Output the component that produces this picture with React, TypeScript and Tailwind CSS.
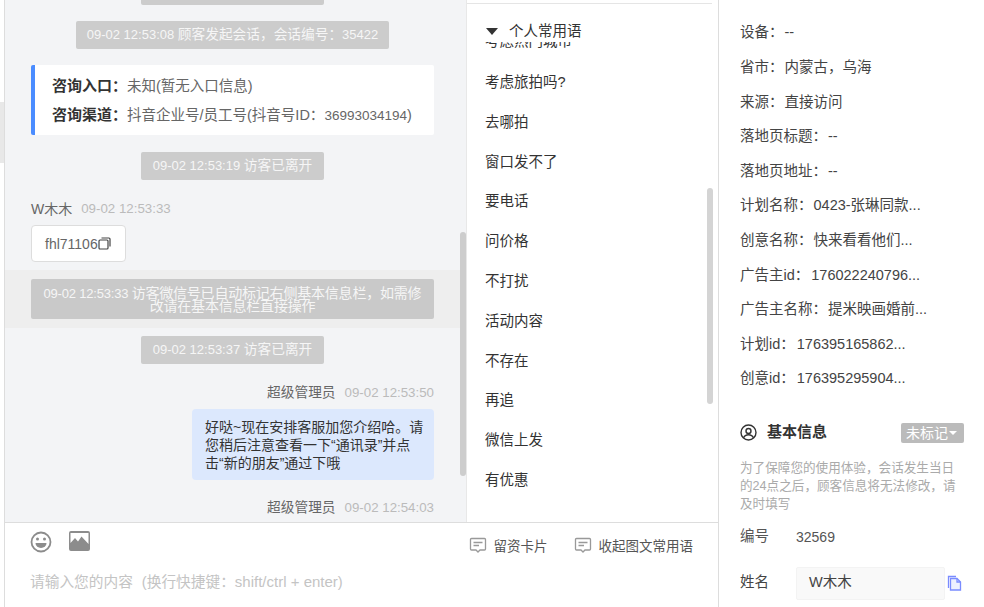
const font = "font-['Liberation_Sans','Noto_Sans_CJK_SC',sans-serif]"

function Lat({ children }: { children: React.ReactNode }) {
    return <span className="text-[13px]">{children}</span>
}

function SysPill({ time, text, num, className = "" }: { time?: string; text?: string; num?: string; className?: string }) {
    return (
        <div className={`self-center h-7 flex items-center justify-center bg-[#cccccc] text-[#f6f6f6] text-[13.700px] rounded-[2px] whitespace-nowrap ${className}`}>
            <span>
                {time && <Lat>{time} </Lat>}
                {text}
                {num && <Lat>{num}</Lat>}
            </span>
        </div>
    )
}

function ChatIcon() {
    return (
        <svg width="18" height="17" viewBox="0 0 18 17" fill="none" stroke="#999999" strokeWidth="1.3">
            <path d="M2.5 1.5h13a1 1 0 0 1 1 1v9.500a1 1 0 0 1-1 1h-4.500l-2 2-2-2h-4.500a1 1 0 0 1-1-1v-9.500a1 1 0 0 1 1-1z" />
            <path d="M4.500 5.500h9M4.500 8.500h5.500" />
        </svg>
    )
}

const phrases = ["考虑旅拍吗?", "去哪拍", "窗口发不了", "要电话", "问价格", "不打扰", "活动内容", "不存在", "再追", "微信上发", "有优惠"]

const infoRows = [
    ["设备：", "--"],
    ["省市：", "内蒙古，乌海"],
    ["来源：", "直接访问"],
    ["落地页标题：", "--"],
    ["落地页地址：", "--"],
    ["计划名称：", "0423-张琳同款..."],
    ["创意名称：", "快来看看他们..."],
    ["广告主id：", "176022240796..."],
    ["广告主名称：", "提米映画婚前..."],
    ["计划id：", "176395165862..."],
    ["创意id：", "176395295904..."],
]

export default function App() {
    return (
        <div className={`${font} w-[984px] h-[607px] flex overflow-hidden bg-white text-[#333333]`}>
            <div className="w-[4px] shrink-0 flex flex-col pt-[102px]">
                <div className="h-[61px] bg-[#e8e8e8]"></div>
            </div>

            <div className="w-[715px] shrink-0 flex flex-col border-x border-[#dddddd]">
                <div className="h-[522px] shrink-0 flex overflow-hidden">
                    <div className="relative w-[461px] shrink-0 bg-[#f3f4f6] flex flex-col overflow-hidden pl-[26px] pr-[32px]">
                        <SysPill className="-mt-[23px] w-[183px]" />
                        <SysPill className="mt-[16px] w-[313px]" time="09-02 12:53:08" text="顾客发起会话，会话编号：" num="35422" />
                        <div className="mt-[16px] h-[70px] bg-white border-l-4 border-[#4a8cff] rounded-[2px] pl-[17px] flex flex-col justify-center gap-[7px] text-[15px] leading-[21px]">
                            <div className="whitespace-nowrap"><span className="font-bold text-[#333333]">咨询入口：</span><span className="text-[14.500px] text-[#666666]">未知(暂无入口信息)</span></div>
                            <div className="whitespace-nowrap"><span className="font-bold text-[#333333]">咨询渠道：</span><span className="text-[14.500px] text-[#666666]">抖音企业号/员工号(抖音号ID：<span className="text-[13.500px]">36993034194</span>)</span></div>
                        </div>
                        <SysPill className="mt-[17px] w-[183px]" time="09-02 12:53:19" text="访客已离开" />
                        <div className="mt-[19px] h-5 flex items-center text-sm whitespace-nowrap">
                            <span className="text-[#666666]">W木木</span>
                            <span className="ml-[9px] text-[13.300px] text-[#bbbbbb]">09-02 12:53:33</span>
                        </div>
                        <div className="mt-[6px] w-[95px] h-[37px] bg-white border border-[#dddddd] rounded-[4px] flex items-center pl-[13px] text-sm text-[#666666]">
                            fhl71106
                            <svg width="13" height="13" viewBox="0 0 13 13" fill="none" stroke="#444444" strokeWidth="1.2">
                                <rect x="1" y="3" width="9" height="9" rx="1" />
                                <path d="M3.500 1h7.500a1 1 0 0 1 1 1v7.500" />
                            </svg>
                        </div>
                        <div className="mt-[8px] -mx-[26px] h-[58px] px-[26px] bg-[#eeeeee] flex items-center">
                            <div className="w-[403px] h-10 bg-[#c9c9c9] rounded-[2px] text-[#f6f6f6] text-sm leading-[13px] tracking-[-0.2px] text-center flex items-center px-[12px] pt-[2px]">
                                <span><Lat>09-02 12:53:33 </Lat>访客微信号已自动标记右侧基本信息栏，如需修改请在基本信息栏直接操作</span>
                            </div>
                        </div>
                        <SysPill className="mt-[8px] w-[183px]" time="09-02 12:53:37" text="访客已离开" />
                        <div className="mt-[19px] h-5 flex items-center justify-end text-[13.700px] whitespace-nowrap">
                            <span className="text-[#666666]">超级管理员</span>
                            <span className="ml-[9px] text-[13.300px] text-[#bbbbbb]">09-02 12:53:50</span>
                        </div>
                        <div className="mt-[6px] self-end w-[242px] h-[71px] bg-[#dce8fd] rounded-[4px] pl-[13px] pr-[10px] py-[9px] text-sm leading-[18px] text-[#333333]">
                            好哒~现在安排客服加您介绍哈。请您稍后注意查看一下“通讯录”并点击“新的朋友”通过下哦
                        </div>
                        <div className="mt-[18px] h-5 flex items-center justify-end text-[13.700px] whitespace-nowrap">
                            <span className="text-[#666666]">超级管理员</span>
                            <span className="ml-[9px] text-[13.300px] text-[#bbbbbb]">09-02 12:54:03</span>
                        </div>
                        <div className="absolute left-[455px] top-[232px] w-[6px] h-[244px] rounded-full bg-[#cdcdcd]"></div>
                    </div>

                    <div className="relative flex-1 border-l border-[#e8e8e8] flex flex-col pr-[6px]">
                        <div className="h-[39px] shrink-0 mt-[3px] border-t border-[#e5e5e5] pl-[19px] flex items-center gap-[11px] text-[14.500px] text-[#333333] pt-[17px]">
                            <span className="w-0 h-0 border-x-[6px] border-x-transparent border-t-[7px] border-t-[#333333]"></span>
                            个人常用语
                        </div>
                        <div className="flex-1 overflow-hidden pl-[18px] text-[14.500px]">
                            <div className="-mt-[19px] h-[40px] leading-[36px] text-[#333333]">考虑热门城市</div>
                            {phrases.map((item) => (
                                <div key={item} className="h-[39.800px] flex items-center text-[#333333]">{item}</div>
                            ))}
                        </div>
                        <div className="absolute right-[5px] top-[188px] w-[6px] h-[216px] rounded-full bg-[#d4d4d4]"></div>
                    </div>
                </div>

                <div className="flex-1 border-t border-[#dddddd] flex flex-col pl-[25px] pr-[25px]">
                    <div className="h-[44px] flex">
                        <div className="flex items-start gap-[17px] pt-[8px]">
                            <svg width="22" height="22" viewBox="0 0 22 22" fill="none">
                                <circle cx="11" cy="11" r="9.500" stroke="#8c8c8c" strokeWidth="1.800" />
                                <circle cx="7.500" cy="8" r="1.500" fill="#8c8c8c" />
                                <circle cx="14.500" cy="8" r="1.500" fill="#8c8c8c" />
                                <path d="M5.500 12h11a5.500 5 0 0 1-11 0z" fill="#8c8c8c" />
                            </svg>
                            <svg width="21" height="20" viewBox="0 0 21 20">
                                <path fillRule="evenodd" fill="#8c8c8c" d="M2 0h17a2 2 0 0 1 2 2v16a2 2 0 0 1-2 2h-17a2 2 0 0 1-2-2v-16a2 2 0 0 1 2-2zM1.500 2v10l4.500-5 3 3.500 3.500-5 7 7.500v-11z" />
                            </svg>
                        </div>
                        <div className="ml-auto pt-[14px] flex items-start text-[13.500px] leading-[20px] text-[#555555]">
                            <ChatIcon />
                            <span className="ml-[7px]">留资卡片</span>
                            <span className="ml-[26px]"><ChatIcon /></span>
                            <span className="ml-[7px]">收起图文常用语</span>
                        </div>
                    </div>
                    <div className="mt-[5px] text-[14.700px] leading-[20px] text-[#c4c4c4] whitespace-nowrap">
                        请输入您的内容<span className="ml-[9px]">(换行快捷键：<span className="text-[15px]">shift/ctrl + enter</span>)</span>
                    </div>
                </div>
            </div>

            <div className="flex-1 pl-[21px] pr-[20px] flex flex-col text-[14.500px]">
                <div className="pt-[16px] flex flex-col">
                    {infoRows.map(([label, value]) => (
                        <div key={label} className="h-[34.600px] flex items-center whitespace-nowrap text-[#444444]">
                            {label}
                            <span className={label.includes("id") ? "ml-[2px]" : "ml-[1px]"}>{value}</span>
                        </div>
                    ))}
                </div>
                <div className="mt-[26px] h-[20px] flex items-center">
                    <svg width="17" height="17" viewBox="0 0 17 17" fill="none" stroke="#333333" strokeWidth="1.400">
                        <circle cx="8.500" cy="8.500" r="7.500" />
                        <circle cx="8.500" cy="7" r="2.500" />
                        <path d="M3.500 14c1-2.500 2.800-3.200 5-3.200s4 .7 5 3.200" />
                    </svg>
                    <span className="ml-[10px] text-[15px] font-bold text-[#333333]">基本信息</span>
                    <span className="ml-auto w-[63px] h-[20px] bg-[#bbbbbb] rounded-[2px] text-white text-sm flex items-center pl-[5px]">
                        未标记
                        <span className="ml-[1px] w-0 h-0 border-x-[4px] border-x-transparent border-t-[4px] border-t-white"></span>
                    </span>
                </div>
                <div className="mt-[16px] text-[12.600px] leading-[18px] text-[#aaaaaa] pr-[7px]">为了保障您的使用体验，会话发生当日的24点之后，顾客信息将无法修改，请及时填写</div>
                <div className="mt-[14px] h-[20px] flex items-center text-[#555555]">
                    <span className="w-[56px]">编号</span>
                    <span className="text-sm">32569</span>
                </div>
                <div className="mt-[20px] flex items-center text-[#444444]">
                    <span className="w-[56px]">姓名</span>
                    <div className="w-[149px] h-[33px] bg-[#f9f9f9] border border-[#f3f3f3] rounded-[2px] flex items-center pl-[12px]">W木木</div>
                    <svg className="ml-[2px]" width="15" height="16" viewBox="0 0 15 16" fill="none" stroke="#7a8cff" strokeWidth="1.300">
                        <path d="M1.500 13v-11.500h7.500" />
                        <path d="M3.500 3.500h6.500l3.500 3.500v8h-10z" fill="#eef2ff" />
                        <path d="M10 3.500v3.500h3.500" />
                    </svg>
                </div>
            </div>
        </div>
    )
}
